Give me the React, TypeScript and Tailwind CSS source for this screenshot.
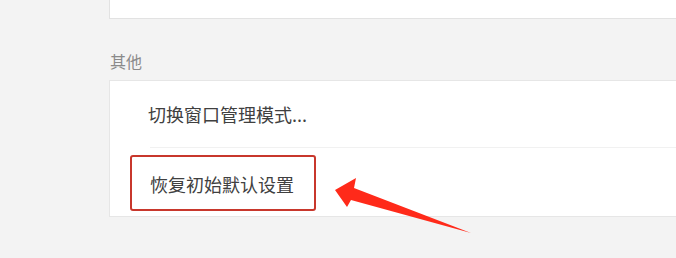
import React from "react";

const font = { fontFamily: '"Noto Sans CJK SC", "Noto Sans", sans-serif' };

export default function App() {
  return (
    <div
      className="relative w-[676px] h-[258px] bg-[#f3f3f3] flex overflow-hidden"
      style={font}
    >
      <div className="w-[109px] shrink-0" />
      <div className="flex-1 flex flex-col">
        <div className="h-[19px] bg-white border-l border-b border-[#e2e2e2]" />
        <div className="h-[61px] pt-[22px] flex items-center">
          <span className="text-[16px] text-[#8a8a8a] leading-none ml-[1px]">其他</span>
        </div>
        <div className="bg-white border border-r-0 border-[#e6e6e6] flex flex-col">
          <div className="h-[66px] flex items-center pl-[38px]">
            <span className="text-[18px] text-[#404040] leading-none">切换窗口管理模式...</span>
          </div>
          <div className="ml-[40px] h-px bg-[#f1f1f1]" />
          <div className="relative h-[68px] flex items-center pl-[40px] pt-[3px]">
            <span className="text-[18px] text-[#404040] leading-none">恢复初始默认设置</span>
            <div className="absolute left-[20px] top-[7px] w-[186px] h-[56px] border-2 border-[#c8372c] rounded-[3px]" />
          </div>
        </div>
      </div>
      <svg
        className="absolute left-0 top-0"
        width="676"
        height="258"
        viewBox="0 0 676 258"
      >
        <polygon
          points="335,190 356,178 354,188 471,233 351,200 347,207"
          fill="#ff2a1a"
        />
      </svg>
    </div>
  );
}
